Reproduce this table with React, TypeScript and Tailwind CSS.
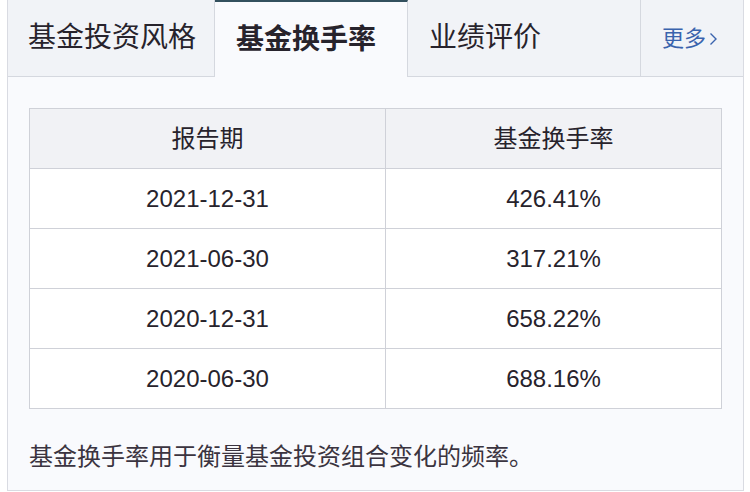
const rows = [
  { date: "2021-12-31", rate: "426.41%" },
  { date: "2021-06-30", rate: "317.21%" },
  { date: "2020-12-31", rate: "658.22%" },
  { date: "2020-06-30", rate: "688.16%" },
];

const font = "font-['Liberation_Sans','Noto_Sans_CJK_SC',sans-serif]";

export default function App() {
  return (
    <div className={`h-[492px] w-[750px] overflow-hidden bg-white ${font} text-[#27232c]`}>
      <div className="ml-[7px] flex h-[491px] w-[737px] flex-col border-x border-b border-[#d9dbe2] bg-[#f9fafd]">
        <div className="flex h-[77px] shrink-0">
          <div className="flex w-[207px] items-center border-b border-r border-[#d5d8df] bg-[#f1f3f7] pl-[20px] text-[28px]">
            基金投资风格
          </div>
          <div className="flex w-[193px] items-center border-r border-t-2 border-r-[#d5d8df] border-t-[#33505e] pl-[21px] text-[28px] font-bold">
            基金换手率
          </div>
          <div className="flex w-[233px] items-center border-b border-r border-[#d5d8df] bg-[#f1f3f7] pl-[21px] text-[28px]">
            业绩评价
          </div>
          <div className="flex flex-1 items-center gap-[3px] border-b border-[#d5d8df] bg-[#f1f3f7] pl-[21px] text-[22px] text-[#3a63ad]">
            更多
            <svg width="9" height="14" viewBox="0 0 9 14" className="mt-[2px]">
              <path d="M1.5 1.5 L7 7 L1.5 12.5" fill="none" stroke="#3a63ad" strokeWidth="1.4" />
            </svg>
          </div>
        </div>

        <div className="px-[21px] pt-[31px]">
          <table className="w-[693px] border-collapse text-center text-[24px]">
            <thead>
              <tr className="h-[60px] bg-[#f1f2f5]">
                <th className="w-[356px] border border-[#cfd1d8] font-normal">报告期</th>
                <th className="border border-[#cfd1d8] font-normal">基金换手率</th>
              </tr>
            </thead>
            <tbody>
              {rows.map((r) => (
                <tr key={r.date} className="h-[60px] bg-white">
                  <td className="border border-[#cfd1d8]">{r.date}</td>
                  <td className="border border-[#cfd1d8]">{r.rate}</td>
                </tr>
              ))}
            </tbody>
          </table>
        </div>

        <p className="mt-[36px] pl-[21px] text-[24px] leading-none text-[#3b3440]">
          基金换手率用于衡量基金投资组合变化的频率。
        </p>
      </div>
    </div>
  );
}
